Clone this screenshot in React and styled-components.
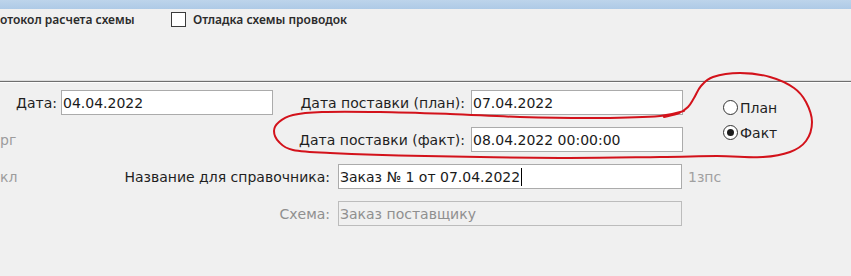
import React from 'react';
import styled, { createGlobalStyle } from 'styled-components';

const GlobalStyle = createGlobalStyle`
  html, body { margin: 0; padding: 0; background: #f0f0f0; }
  body { font-family: "DejaVu Sans", sans-serif; overflow: hidden; }
`;

const Page = styled.div`
  position: relative;
  width: 851px;
  height: 276px;
  overflow: hidden;
  background: #f0f0f0;
`;

const TitleStrip = styled.div`
  height: 9px;
  background: linear-gradient(#bdd4eb, #aecae6);
`;

const Options = styled.div`
  height: 71px;
  box-sizing: border-box;
  padding-top: 3px;
  display: flex;
  align-items: flex-start;
  font-family: "Noto Sans", sans-serif;
  font-size: 12px;
  font-weight: 600;
  color: #2b2b2b;
`;

const OptionText = styled.span`
  width: 171px;
  line-height: 15px;
  white-space: nowrap;
`;

const CheckOption = styled.label`
  display: flex;
  align-items: center;
  gap: 7px;
  line-height: 15px;
`;

const CheckBox = styled.span`
  box-sizing: border-box;
  width: 15px;
  height: 15px;
  border: 1px solid #3a3a3a;
  background: #fff;
`;

const Divider = styled.div`
  height: 1px;
  background: #6f6f6f;
  border-top: 1px solid #dcdcdc;
  border-bottom: 1px solid #fdfdfd;
`;

const Form = styled.div`
  padding-top: 7px;
  font-size: 14px;
  color: #1f1f1f;
`;

const UpperGrid = styled.div`
  display: grid;
  grid-template-columns: 61px 212px 198px 212px 1fr;
  grid-template-rows: 25px 25px;
  row-gap: 12px;
`;

const LowerGrid = styled.div`
  display: grid;
  grid-template-columns: 338px 344px 1fr;
  grid-template-rows: 25px 25px;
  row-gap: 12px;
  margin-top: 12px;
`;

const LabelCell = styled.div`
  display: flex;
  align-items: center;
  justify-content: ${p => (p.$split ? 'space-between' : 'flex-end')};
  padding-right: ${p => p.$pad}px;
  white-space: nowrap;
`;

const Label = styled.span`
  color: ${p => (p.$muted ? '#8f8f8f' : '#1f1f1f')};
`;

const Stub = styled.span`
  color: #9c9c9c;
`;

const StubCell = styled.div`
  display: flex;
  align-items: center;
  grid-column: ${p => p.$span};
`;

const Field = styled.div`
  box-sizing: border-box;
  height: 25px;
  border: 1px solid ${p => (p.$disabled ? '#bcbcbc' : '#ababab')};
  background: ${p => (p.$disabled ? '#f0f0f0' : '#ffffff')};
  color: ${p => (p.$disabled ? '#8f8f8f' : '#1a1a1a')};
  padding-left: 1px;
  display: flex;
  align-items: center;
  white-space: nowrap;
  overflow: hidden;
`;

const Caret = styled.span`
  display: inline-block;
  width: 1px;
  height: 18px;
  margin-left: 1px;
  background: #000;
`;

const Hint = styled.div`
  display: flex;
  align-items: center;
  padding-left: 6px;
  color: #a0a0a0;
`;

const RadioGroup = styled.div`
  grid-column: 5;
  grid-row: 1 / span 2;
  display: flex;
  flex-direction: column;
  gap: 10px;
  padding-left: 40px;
  padding-top: 10px;
`;

const RadioItem = styled.label`
  display: flex;
  align-items: center;
  gap: 2px;
  height: 15px;
`;

const RadioCircle = styled.span`
  box-sizing: border-box;
  width: 15px;
  height: 15px;
  border-radius: 50%;
  border: 1px solid #333;
  background: #fff;
  display: flex;
  align-items: center;
  justify-content: center;
  &::after {
    content: '';
    width: 7px;
    height: 7px;
    border-radius: 50%;
    background: ${p => (p.$checked ? '#1c1c1c' : 'transparent')};
  }
`;

const Annotation = styled.svg`
  position: absolute;
  left: 0;
  top: 0;
  pointer-events: none;
`;

const loop = [
  [684, 111], [660, 116], [600, 118], [520, 117], [450, 114], [380, 112],
  [322, 112], [293, 115], [279, 122], [274, 131], [279, 142], [293, 150],
  [330, 153], [425, 156], [560, 158], [660, 157], [717, 156], [763, 157],
  [790, 152], [806, 141], [812, 122], [806, 102], [794, 88], [770, 77],
  [740, 73], [713, 77], [701, 86], [694, 98], [688, 107], [679, 113], [664, 117],
];

function smoothPath(pts) {
  let d = `M ${pts[0][0]} ${pts[0][1]}`;
  for (let i = 0; i < pts.length - 1; i++) {
    const p0 = pts[i - 1] || pts[i];
    const p1 = pts[i];
    const p2 = pts[i + 1];
    const p3 = pts[i + 2] || p2;
    const c1 = [p1[0] + (p2[0] - p0[0]) / 6, p1[1] + (p2[1] - p0[1]) / 6];
    const c2 = [p2[0] - (p3[0] - p1[0]) / 6, p2[1] - (p3[1] - p1[1]) / 6];
    d += ` C ${c1[0].toFixed(1)} ${c1[1].toFixed(1)}, ${c2[0].toFixed(1)} ${c2[1].toFixed(1)}, ${p2[0]} ${p2[1]}`;
  }
  return d;
}

export default function App() {
  return (
    <Page>
      <GlobalStyle />
      <TitleStrip />
      <Options>
        <OptionText>отокол расчета схемы</OptionText>
        <CheckOption>
          <CheckBox />
          Отладка схемы проводок
        </CheckOption>
      </Options>
      <Divider />
      <Form>
        <UpperGrid>
          <LabelCell $pad={4}><Label>Дата:</Label></LabelCell>
          <Field>04.04.2022</Field>
          <LabelCell $pad={6}><Label>Дата поставки (план):</Label></LabelCell>
          <Field>07.04.2022</Field>
          <RadioGroup>
            <RadioItem><RadioCircle />План</RadioItem>
            <RadioItem><RadioCircle $checked />Факт</RadioItem>
          </RadioGroup>
          <StubCell $span="1 / span 2"><Stub>рг</Stub></StubCell>
          <LabelCell $pad={6}><Label>Дата поставки (факт):</Label></LabelCell>
          <Field>08.04.2022 00:00:00</Field>
        </UpperGrid>
        <LowerGrid>
          <LabelCell $pad={8} $split>
            <Stub>кл</Stub>
            <Label>Название для справочника:</Label>
          </LabelCell>
          <Field>Заказ № 1 от 07.04.2022<Caret /></Field>
          <Hint>1зпс</Hint>
          <LabelCell $pad={8}><Label $muted>Схема:</Label></LabelCell>
          <Field $disabled>Заказ поставщику</Field>
        </LowerGrid>
      </Form>
      <Annotation width="851" height="276" viewBox="0 0 851 276">
        <path d={smoothPath(loop)} fill="none" stroke="#d3121b" strokeWidth="2" strokeLinecap="round" strokeLinejoin="round" />
      </Annotation>
    </Page>
  );
}
